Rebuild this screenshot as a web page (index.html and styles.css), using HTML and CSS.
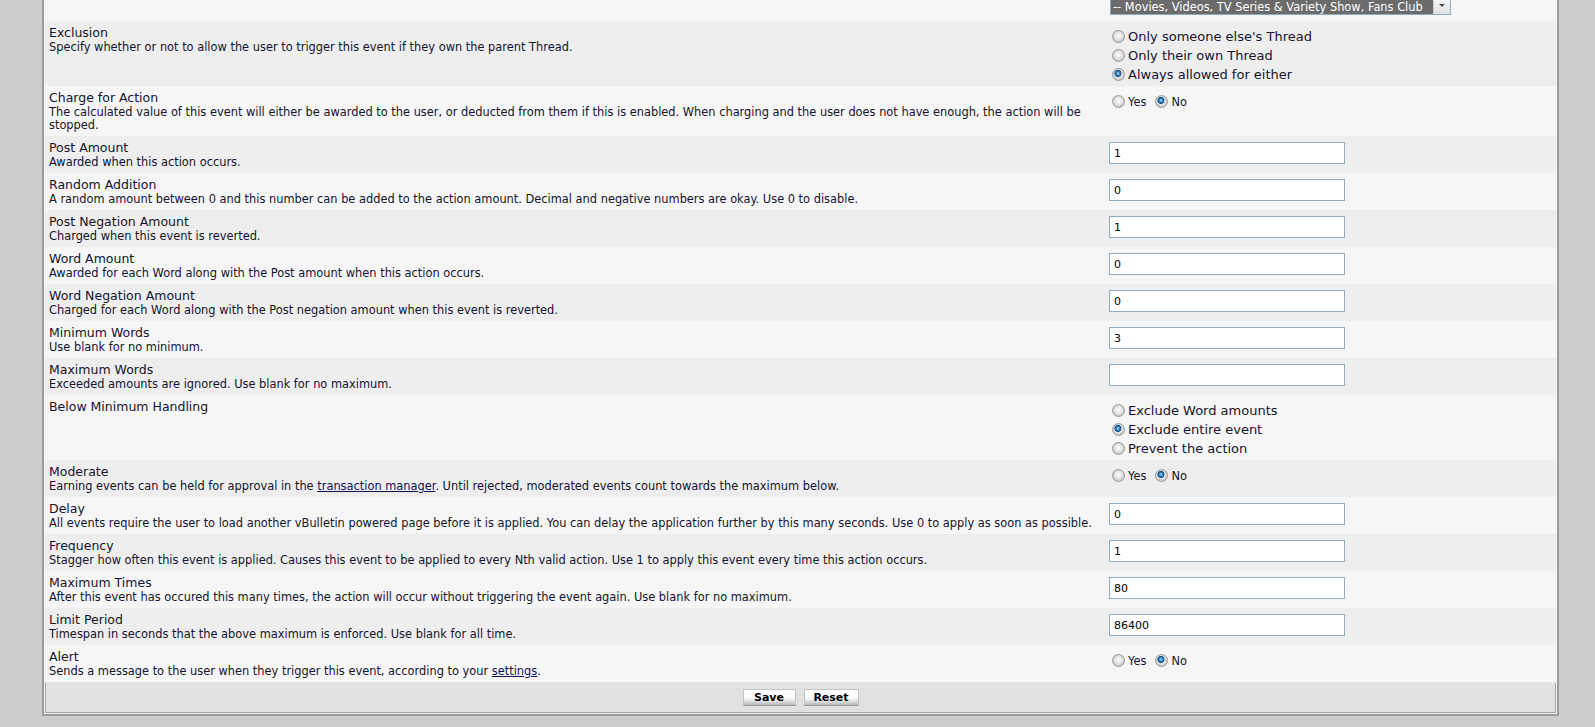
FILE: index.html
```html
<!DOCTYPE html>
<html lang="en">

<head>
    <meta charset="UTF-8">
    <title>Edit Event</title>
    <link rel="stylesheet" href="styles.css">
</head>

<body>
    <div class="tborder">
        <table class="cp-table">
            <colgroup>
                <col class="col-label">
                <col class="col-control">
            </colgroup>

            <tr class="alt2 top-row">
                <td></td>
                <td>
                    <div class="listbox">
                        <div class="listbox-option">-- Movies, Videos, TV Series &amp; Variety Show, Fans Club</div>
                        <div class="listbox-scroll"><span class="arrow-down"></span></div>
                    </div>
                </td>
            </tr>

            <tr class="alt1">
                <td>
                    <div class="title">Exclusion</div>
                    <div class="desc">Specify whether or not to allow the user to trigger this event if they own the parent Thread.</div>
                </td>
                <td>
                    <div class="radio-group">
                        <label class="radio-line"><input type="radio" name="exclusion">Only someone else's Thread</label>
                        <label class="radio-line"><input type="radio" name="exclusion">Only their own Thread</label>
                        <label class="radio-line"><input type="radio" name="exclusion" checked>Always allowed for either</label>
                    </div>
                </td>
            </tr>

            <tr class="alt2">
                <td>
                    <div class="title">Charge for Action</div>
                    <div class="desc">The calculated value of this event will either be awarded to the user, or deducted from them if this is enabled. When charging and the user does not have enough, the action will be stopped.</div>
                </td>
                <td>
                    <div class="yes-no">
                        <label><input type="radio" name="charge">Yes</label>
                        <label><input type="radio" name="charge" checked>No</label>
                    </div>
                </td>
            </tr>

            <tr class="alt1">
                <td>
                    <div class="title">Post Amount</div>
                    <div class="desc">Awarded when this action occurs.</div>
                </td>
                <td><input type="text" class="bginput" value="1"></td>
            </tr>

            <tr class="alt2">
                <td>
                    <div class="title">Random Addition</div>
                    <div class="desc">A random amount between 0 and this number can be added to the action amount. Decimal and negative numbers are okay. Use 0 to disable.</div>
                </td>
                <td><input type="text" class="bginput" value="0"></td>
            </tr>

            <tr class="alt1">
                <td>
                    <div class="title">Post Negation Amount</div>
                    <div class="desc">Charged when this event is reverted.</div>
                </td>
                <td><input type="text" class="bginput" value="1"></td>
            </tr>

            <tr class="alt2">
                <td>
                    <div class="title">Word Amount</div>
                    <div class="desc">Awarded for each Word along with the Post amount when this action occurs.</div>
                </td>
                <td><input type="text" class="bginput" value="0"></td>
            </tr>

            <tr class="alt1">
                <td>
                    <div class="title">Word Negation Amount</div>
                    <div class="desc">Charged for each Word along with the Post negation amount when this event is reverted.</div>
                </td>
                <td><input type="text" class="bginput" value="0"></td>
            </tr>

            <tr class="alt2">
                <td>
                    <div class="title">Minimum Words</div>
                    <div class="desc">Use blank for no minimum.</div>
                </td>
                <td><input type="text" class="bginput" value="3"></td>
            </tr>

            <tr class="alt1">
                <td>
                    <div class="title">Maximum Words</div>
                    <div class="desc">Exceeded amounts are ignored. Use blank for no maximum.</div>
                </td>
                <td><input type="text" class="bginput" value=""></td>
            </tr>

            <tr class="alt2">
                <td>
                    <div class="title">Below Minimum Handling</div>
                </td>
                <td>
                    <div class="radio-group">
                        <label class="radio-line"><input type="radio" name="belowmin">Exclude Word amounts</label>
                        <label class="radio-line"><input type="radio" name="belowmin" checked>Exclude entire event</label>
                        <label class="radio-line"><input type="radio" name="belowmin">Prevent the action</label>
                    </div>
                </td>
            </tr>

            <tr class="alt1">
                <td>
                    <div class="title">Moderate</div>
                    <div class="desc">Earning events can be held for approval in the <a href="#">transaction manager</a>. Until rejected, moderated events count towards the maximum below.</div>
                </td>
                <td>
                    <div class="yes-no">
                        <label><input type="radio" name="moderate">Yes</label>
                        <label><input type="radio" name="moderate" checked>No</label>
                    </div>
                </td>
            </tr>

            <tr class="alt2">
                <td>
                    <div class="title">Delay</div>
                    <div class="desc">All events require the user to load another vBulletin powered page before it is applied. You can delay the application further by this many seconds. Use 0 to apply as soon as possible.</div>
                </td>
                <td><input type="text" class="bginput" value="0"></td>
            </tr>

            <tr class="alt1">
                <td>
                    <div class="title">Frequency</div>
                    <div class="desc">Stagger how often this event is applied. Causes this event to be applied to every Nth valid action. Use 1 to apply this event every time this action occurs.</div>
                </td>
                <td><input type="text" class="bginput" value="1"></td>
            </tr>

            <tr class="alt2">
                <td>
                    <div class="title">Maximum Times</div>
                    <div class="desc">After this event has occured this many times, the action will occur without triggering the event again. Use blank for no maximum.</div>
                </td>
                <td><input type="text" class="bginput" value="80"></td>
            </tr>

            <tr class="alt1">
                <td>
                    <div class="title">Limit Period</div>
                    <div class="desc">Timespan in seconds that the above maximum is enforced. Use blank for all time.</div>
                </td>
                <td><input type="text" class="bginput" value="86400"></td>
            </tr>

            <tr class="alt2">
                <td>
                    <div class="title">Alert</div>
                    <div class="desc">Sends a message to the user when they trigger this event, according to your <a href="#">settings</a>.</div>
                </td>
                <td>
                    <div class="yes-no">
                        <label><input type="radio" name="alert">Yes</label>
                        <label><input type="radio" name="alert" checked>No</label>
                    </div>
                </td>
            </tr>

            <tr class="tfoot">
                <td colspan="2">
                    <div class="buttons">
                        <button type="submit" class="button btn-save">Save</button>
                        <button type="reset" class="button btn-reset">Reset</button>
                    </div>
                </td>
            </tr>
        </table>
    </div>
</body>

</html>
```

FILE: styles.css
```css
:root {
    --page: #cccccc;
    --alt1: #eeeeee;
    --alt2: #f6f6f6;
    --foot: #e0e1e3;
    --border: #9c9c9c;
    --text: #14142e;
    --link: #10105a;
    --input-border: #8eadc2;
}

* {
    box-sizing: border-box;
}

body {
    margin: 0;
    background-color: var(--page);
    color: var(--text);
    font-family: 'DejaVu Sans', Verdana, sans-serif;
}

.tborder {
    margin-left: 42px;
    width: 1517px;
    border: 2px solid var(--border);
    border-top: 0;
    padding: 0 1px 1px;
    background-color: #f2f2f2;
}

.cp-table {
    width: 1511px;
    table-layout: fixed;
    border-collapse: separate;
    border-spacing: 0;
}

.col-label {
    width: 1060px;
}

.col-control {
    width: 451px;
}

.cp-table td {
    padding: 4px;
    vertical-align: top;
}

.alt1 td {
    background-color: var(--alt1);
}

.alt2 td {
    background-color: var(--alt2);
}

.title {
    font-size: 12.5px;
    line-height: 16px;
}

.desc {
    font-size: 11.4px;
    line-height: 13px;
}

.desc a {
    color: var(--link);
    text-decoration: underline;
}

/* top row: bottom of the forum list box */
.top-row td {
    height: 21px;
    padding: 0 4px;
}

.listbox {
    display: flex;
    width: 341px;
    height: 15px;
    margin-left: 1px;
    border: 1px solid var(--input-border);
    border-top: 0;
}

.listbox-option {
    flex: 1;
    background-color: #6b6b6b;
    color: #fff;
    font-size: 11.4px;
    line-height: 14px;
    padding-left: 2px;
    white-space: nowrap;
    overflow: hidden;
}

.listbox-scroll {
    width: 17px;
    background: linear-gradient(#f4f4f4, #e2e2e2);
    border-left: 1px solid #d0d0d0;
    display: flex;
    justify-content: center;
    padding-top: 4px;
}

.arrow-down {
    width: 0;
    height: 0;
    border-left: 3px solid transparent;
    border-right: 3px solid transparent;
    border-top: 3px solid #4a4a4a;
}

/* radios */
input[type="radio"] {
    appearance: none;
    -webkit-appearance: none;
    flex: none;
    width: 13px;
    height: 13px;
    margin: 0 3px;
    border: 1px solid #9a9a9a;
    border-radius: 50%;
    background: radial-gradient(circle at 50% 45%, #ffffff 0, #e9e9e9 3px, #c9c9c9 6px);
}

input[type="radio"]:checked {
    background:
        radial-gradient(circle at 45% 40%, #bfe6ff 0, #3a8fd0 1.5px, #0f4f86 3.2px, rgba(15, 79, 134, 0) 3.8px),
        radial-gradient(circle at 50% 45%, #ffffff 0, #e9e9e9 3px, #c9c9c9 6px);
}

.radio-group {
    padding-top: 2px;
    margin-bottom: -2px;
}

.radio-line {
    display: flex;
    align-items: center;
    height: 19px;
    font-size: 13px;
}

.yes-no {
    display: flex;
    align-items: center;
    height: 19px;
    margin-top: 2px;
    font-size: 11.4px;
}

.yes-no label {
    display: flex;
    align-items: center;
}

.yes-no label + label {
    margin-left: 6px;
}

/* text inputs */
.bginput {
    display: block;
    width: 236px;
    height: 22px;
    margin: 2px 0 0;
    padding: 0 4px;
    border: 1px solid var(--input-border);
    background-color: #fff;
    color: #000;
    font-family: 'DejaVu Sans', Verdana, sans-serif;
    font-size: 11px;
}

/* footer with buttons */
.tfoot td {
    background-color: var(--foot);
    border: 1px solid #a6a6a6;
    border-top-color: #e8e8e8;
    padding: 6px 0;
}

.buttons {
    display: flex;
    justify-content: center;
    gap: 8px;
}

.button {
    height: 17px;
    padding: 0;
    border: 1px solid #c4c4c4;
    border-bottom-color: #9a9a9a;
    background: linear-gradient(#ffffff 0, #ffffff 45%, #e6e6e6 70%, #b9b9b9 100%);
    color: #000;
    font-family: 'DejaVu Sans', Verdana, sans-serif;
    font-size: 11px;
    font-weight: bold;
    line-height: 15px;
    cursor: pointer;
}

.btn-save {
    width: 53px;
}

.btn-reset {
    width: 55px;
}
```
